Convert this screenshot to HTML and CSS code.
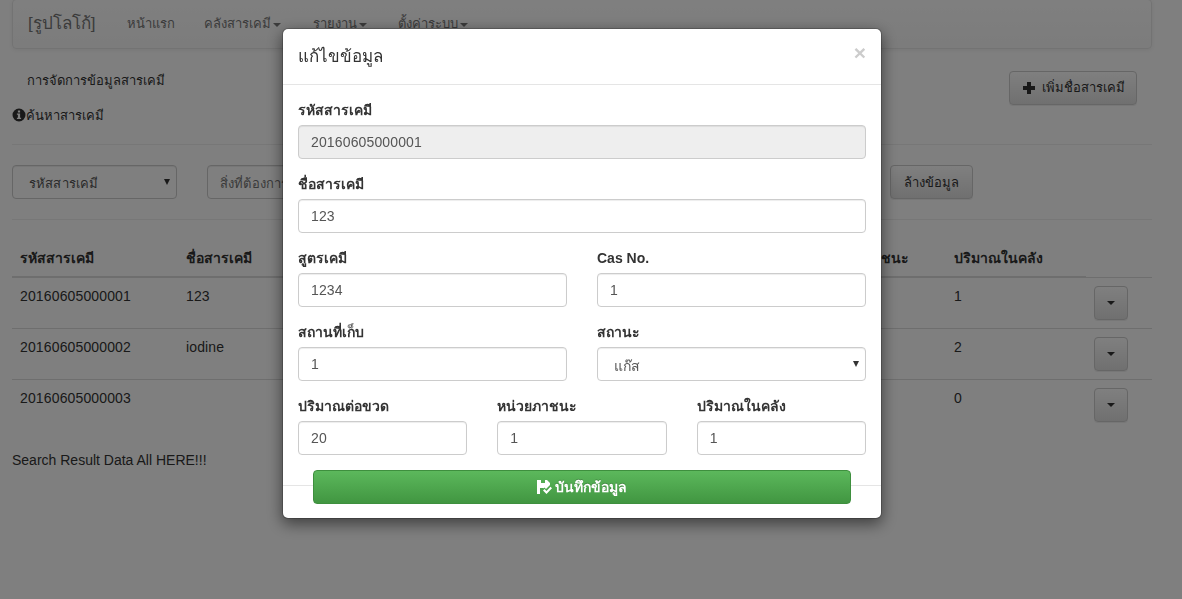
FILE: index.html
```html
<!DOCTYPE html>
<html lang="th">
<head>
<meta charset="utf-8">
<title>การจัดการข้อมูลสารเคมี</title>
<link rel="stylesheet" href="styles.css">
</head>
<body>
<div class="page">
  <nav class="navbar">
    <a class="brand">[รูปโลโก้]</a>
    <a class="nav-link nav-home">หน้าแรก</a>
    <a class="nav-link nav-store">คลังสารเคมี<i class="caret"></i></a>
    <a class="nav-link nav-report">รายงาน<i class="caret"></i></a>
    <a class="nav-link nav-settings">ตั้งค่าระบบ<i class="caret"></i></a>
  </nav>
  <div class="head-row">
    <div class="head-text">
      <div class="page-title">การจัดการข้อมูลสารเคมี</div>
      <div class="search-title">
        <svg class="icon-info" viewBox="0 0 14 14"><path fill-rule="evenodd" d="M7 .5a6.500 6.500 0 1 1 0 13 6.500 6.500 0 0 1 0-13zM5.900 2.600v2h2.200v-2zM4.900 5.600v1.200h1v3H4.900V11h4.200V9.800h-1V5.600z"/></svg>ค้นหาสารเคมี
      </div>
    </div>
    <button class="btn btn-add"><svg class="icon-plus" viewBox="0 0 14 14"><path d="M5 1h4v4h4v4H9v4H5V9H1V5h4z"/></svg>เพิ่มชื่อสารเคมี</button>
  </div>
  <hr class="rule rule-top">
  <div class="search-row">
    <div class="select-wrap search-select"><select class="control"><option>รหัสสารเคมี</option></select></div>
    <input class="control search-input" placeholder="สิ่งที่ต้องการค้นหา">
    <button class="btn btn-clear">ล้างข้อมูล</button>
  </div>
  <hr class="rule rule-bottom">
  <table class="data">
    <colgroup><col class="c1"><col class="c2"><col class="c3"><col class="c4"><col class="c5"><col class="c6"></colgroup>
    <thead><tr><th>รหัสสารเคมี</th><th>ชื่อสารเคมี</th><th></th><th>หน่วยภาชนะ</th><th>ปริมาณในคลัง</th><th class="th-plain"></th></tr></thead>
    <tbody>
      <tr><td>20160605000001</td><td>123</td><td></td><td></td><td>1</td><td><button class="btn btn-menu"><i class="caret caret-dark"></i></button></td></tr>
      <tr><td>20160605000002</td><td>iodine</td><td></td><td></td><td>2</td><td><button class="btn btn-menu"><i class="caret caret-dark"></i></button></td></tr>
      <tr><td>20160605000003</td><td></td><td></td><td></td><td>0</td><td><button class="btn btn-menu"><i class="caret caret-dark"></i></button></td></tr>
    </tbody>
  </table>
  <p class="result-note">Search Result Data All HERE!!!</p>
</div>

<div class="backdrop"></div>
<div class="modal">
  <div class="modal-header">
    <h4 class="modal-title">แก้ไขข้อมูล</h4>
    <span class="close">×</span>
  </div>
  <div class="modal-body">
    <div class="field"><label>รหัสสารเคมี</label><input class="control" value="20160605000001" disabled></div>
    <div class="field"><label>ชื่อสารเคมี</label><input class="control" value="123"></div>
    <div class="grid-2">
      <div class="field"><label>สูตรเคมี</label><input class="control" value="1234"></div>
      <div class="field"><label>Cas No.</label><input class="control" value="1"></div>
      <div class="field"><label>สถานที่เก็บ</label><input class="control" value="1"></div>
      <div class="field"><label>สถานะ</label><div class="select-wrap"><select class="control"><option>แก๊ส</option></select></div></div>
    </div>
    <div class="grid-3">
      <div class="field"><label>ปริมาณต่อขวด</label><input class="control" value="20"></div>
      <div class="field"><label>หน่วยภาชนะ</label><input class="control" value="1"></div>
      <div class="field"><label>ปริมาณในคลัง</label><input class="control" value="1"></div>
    </div>
  </div>
  <div class="modal-footer">
    <button class="btn-save"><svg class="icon-save" viewBox="0 0 15 14"><path fill-rule="evenodd" d="M0 0H10L13 3V5L9 9 7.500 7.500 6.500 8.500V8H3V14H0ZM4 0V3H8V0Z"/><path d="M6 10.500 7.500 9 9.500 11 13.500 6.800 15 8.300 9.500 14Z"/></svg>บันทึกข้อมูล</button>
  </div>
</div>
</body>
</html>
```
FILE: styles.css
```css
* { box-sizing: border-box; }
html, body { margin: 0; height: 100%; overflow: hidden; }
body {
  background: #fff;
  color: #333;
  font: 14px/20px "Liberation Sans", Arial, sans-serif;
}
.page { padding: 0 30px 0 12px; }
.navbar {
  display: flex;
  align-items: center;
  height: 50px;
  margin-top: -1px;
  border: 1px solid #e7e7e7;
  border-radius: 4px;
  background: linear-gradient(#fff, #f8f8f8);
  box-shadow: 0 1px 5px rgba(0,0,0,.075);
  color: #777;
  font-size: 13px;
}
.brand { margin-left: 15px; font-size: 17px; }
.nav-link { white-space: nowrap; }
.nav-home { margin-left: 32px; }
.nav-store { margin-left: 29px; }
.nav-report { margin-left: 32px; }
.nav-settings { margin-left: 31px; }
.caret {
  display: inline-block;
  width: 0; height: 0;
  margin-left: 2px;
  vertical-align: middle;
  border-top: 4px solid;
  border-left: 4px solid transparent;
  border-right: 4px solid transparent;
}
.caret-dark { margin: 0; color: #333; }
.head-row { display: flex; justify-content: space-between; align-items: flex-start; margin-top: 22px; padding-right: 15px; font-size: 13px; }
.page-title { padding-left: 15px; }
.search-title { display: flex; align-items: center; margin-top: 15px; }
.icon-info { width: 14px; height: 14px; fill: #333; margin-top: -3px; }
.btn {
  display: inline-flex;
  align-items: center;
  justify-content: center;
  height: 34px;
  padding: 6px 12px;
  border: 1px solid #ccc;
  border-radius: 4px;
  background: linear-gradient(#fff, #e0e0e0);
  color: #333;
  font: inherit;
  white-space: nowrap;
  box-shadow: 0 1px 1px rgba(0,0,0,.075);
}
.btn-add { width: 128px; padding: 6px 0; }
.icon-plus { width: 14px; height: 14px; fill: #333; margin-right: 6px; }
.rule { margin: 0; border: 0; border-top: 1px solid #eee; }
.rule-top { margin-top: 18px; }
.rule-bottom { margin-top: 20px; }
.control {
  display: block;
  width: 100%;
  height: 34px;
  padding: 6px 12px;
  border: 1px solid #ccc;
  border-radius: 4px;
  background: #fff;
  color: #555;
  font: inherit;
  letter-spacing: .14px;
  box-shadow: inset 0 1px 1px rgba(0,0,0,.075);
}
.control:disabled { background: #eee; opacity: 1; }
select.control { appearance: none; padding: 8px 16px 6px; }
.select-wrap { position: relative; }
.select-wrap::after {
  content: "";
  position: absolute;
  top: 50%;
  right: 7px;
  margin-top: -3px;
  border-top: 6px solid #333;
  border-left: 3px solid transparent;
  border-right: 3px solid transparent;
  pointer-events: none;
}
.search-row { display: flex; margin-top: 20px; font-size: 13px; }
.search-select { width: 165px; flex: none; }
.search-input { width: 653px; flex: none; margin-left: 30px; padding-top: 8px; }
.btn-clear { width: 83px; margin-left: 30px; flex: none; padding-top: 8px; }
.data { border-collapse: collapse; table-layout: fixed; width: 1140px; margin-top: 20px; }
.c1 { width: 166px; }
.c2 { width: 300px; }
.c3 { width: 343px; }
.c4 { width: 125px; }
.c5 { width: 140px; }
.c6 { width: 66px; }
.data th { height: 37px; padding: 8px; text-align: left; border-bottom: 2px solid #ddd; white-space: nowrap; }
.data th.th-plain { border-bottom: 1px solid #ddd; }
.data td { height: 51px; padding: 8px; vertical-align: top; border-top: 1px solid #ddd; letter-spacing: .14px; }
.data tbody tr:first-child td { border-top: 0; }
.btn-menu { width: 34px; }
.result-note { margin: 20px 0 0; }
.backdrop { position: fixed; inset: 0; background: rgba(0,0,0,.5); }
.modal {
  position: fixed;
  left: 282px;
  top: 28px;
  width: 600px;
  border: 1px solid rgba(0,0,0,.2);
  border-radius: 6px;
  background: #fff;
  background-clip: padding-box;
  box-shadow: 0 5px 15px rgba(0,0,0,.5);
}
.modal-header { display: flex; justify-content: space-between; align-items: center; height: 56px; padding: 0 15px; border-bottom: 1px solid #e5e5e5; }
.modal-title { margin: 0; font-size: 17px; font-weight: 400; line-height: 20px; color: #333; }
.close { margin-top: -8px; color: #ccc; font-size: 21px; font-weight: 700; line-height: 1; }
.modal-body { padding: 15px 15px 0; }
.field { margin-bottom: 15px; }
.field label { display: block; margin-bottom: 5px; font-weight: 700; }
.grid-2 { display: grid; grid-template-columns: 1fr 1fr; column-gap: 30px; }
.grid-3 { display: grid; grid-template-columns: 1fr 1fr 1fr; column-gap: 30px; }
.modal-footer { margin-top: 15px; padding: 0 30px 14px; border-top: 1px solid #e5e5e5; }
.btn-save {
  display: flex;
  align-items: center;
  justify-content: center;
  width: 100%;
  height: 34px;
  margin-top: -16px;
  border: 1px solid #3e8f3e;
  border-radius: 4px;
  background: linear-gradient(#5cb85c, #419641);
  color: #fff;
  font: inherit;
  font-weight: 700;
  text-shadow: 0 -1px 0 rgba(0,0,0,.2);
}
.icon-save { width: 15px; height: 14px; fill: #fff; margin-right: 3px; }
```
